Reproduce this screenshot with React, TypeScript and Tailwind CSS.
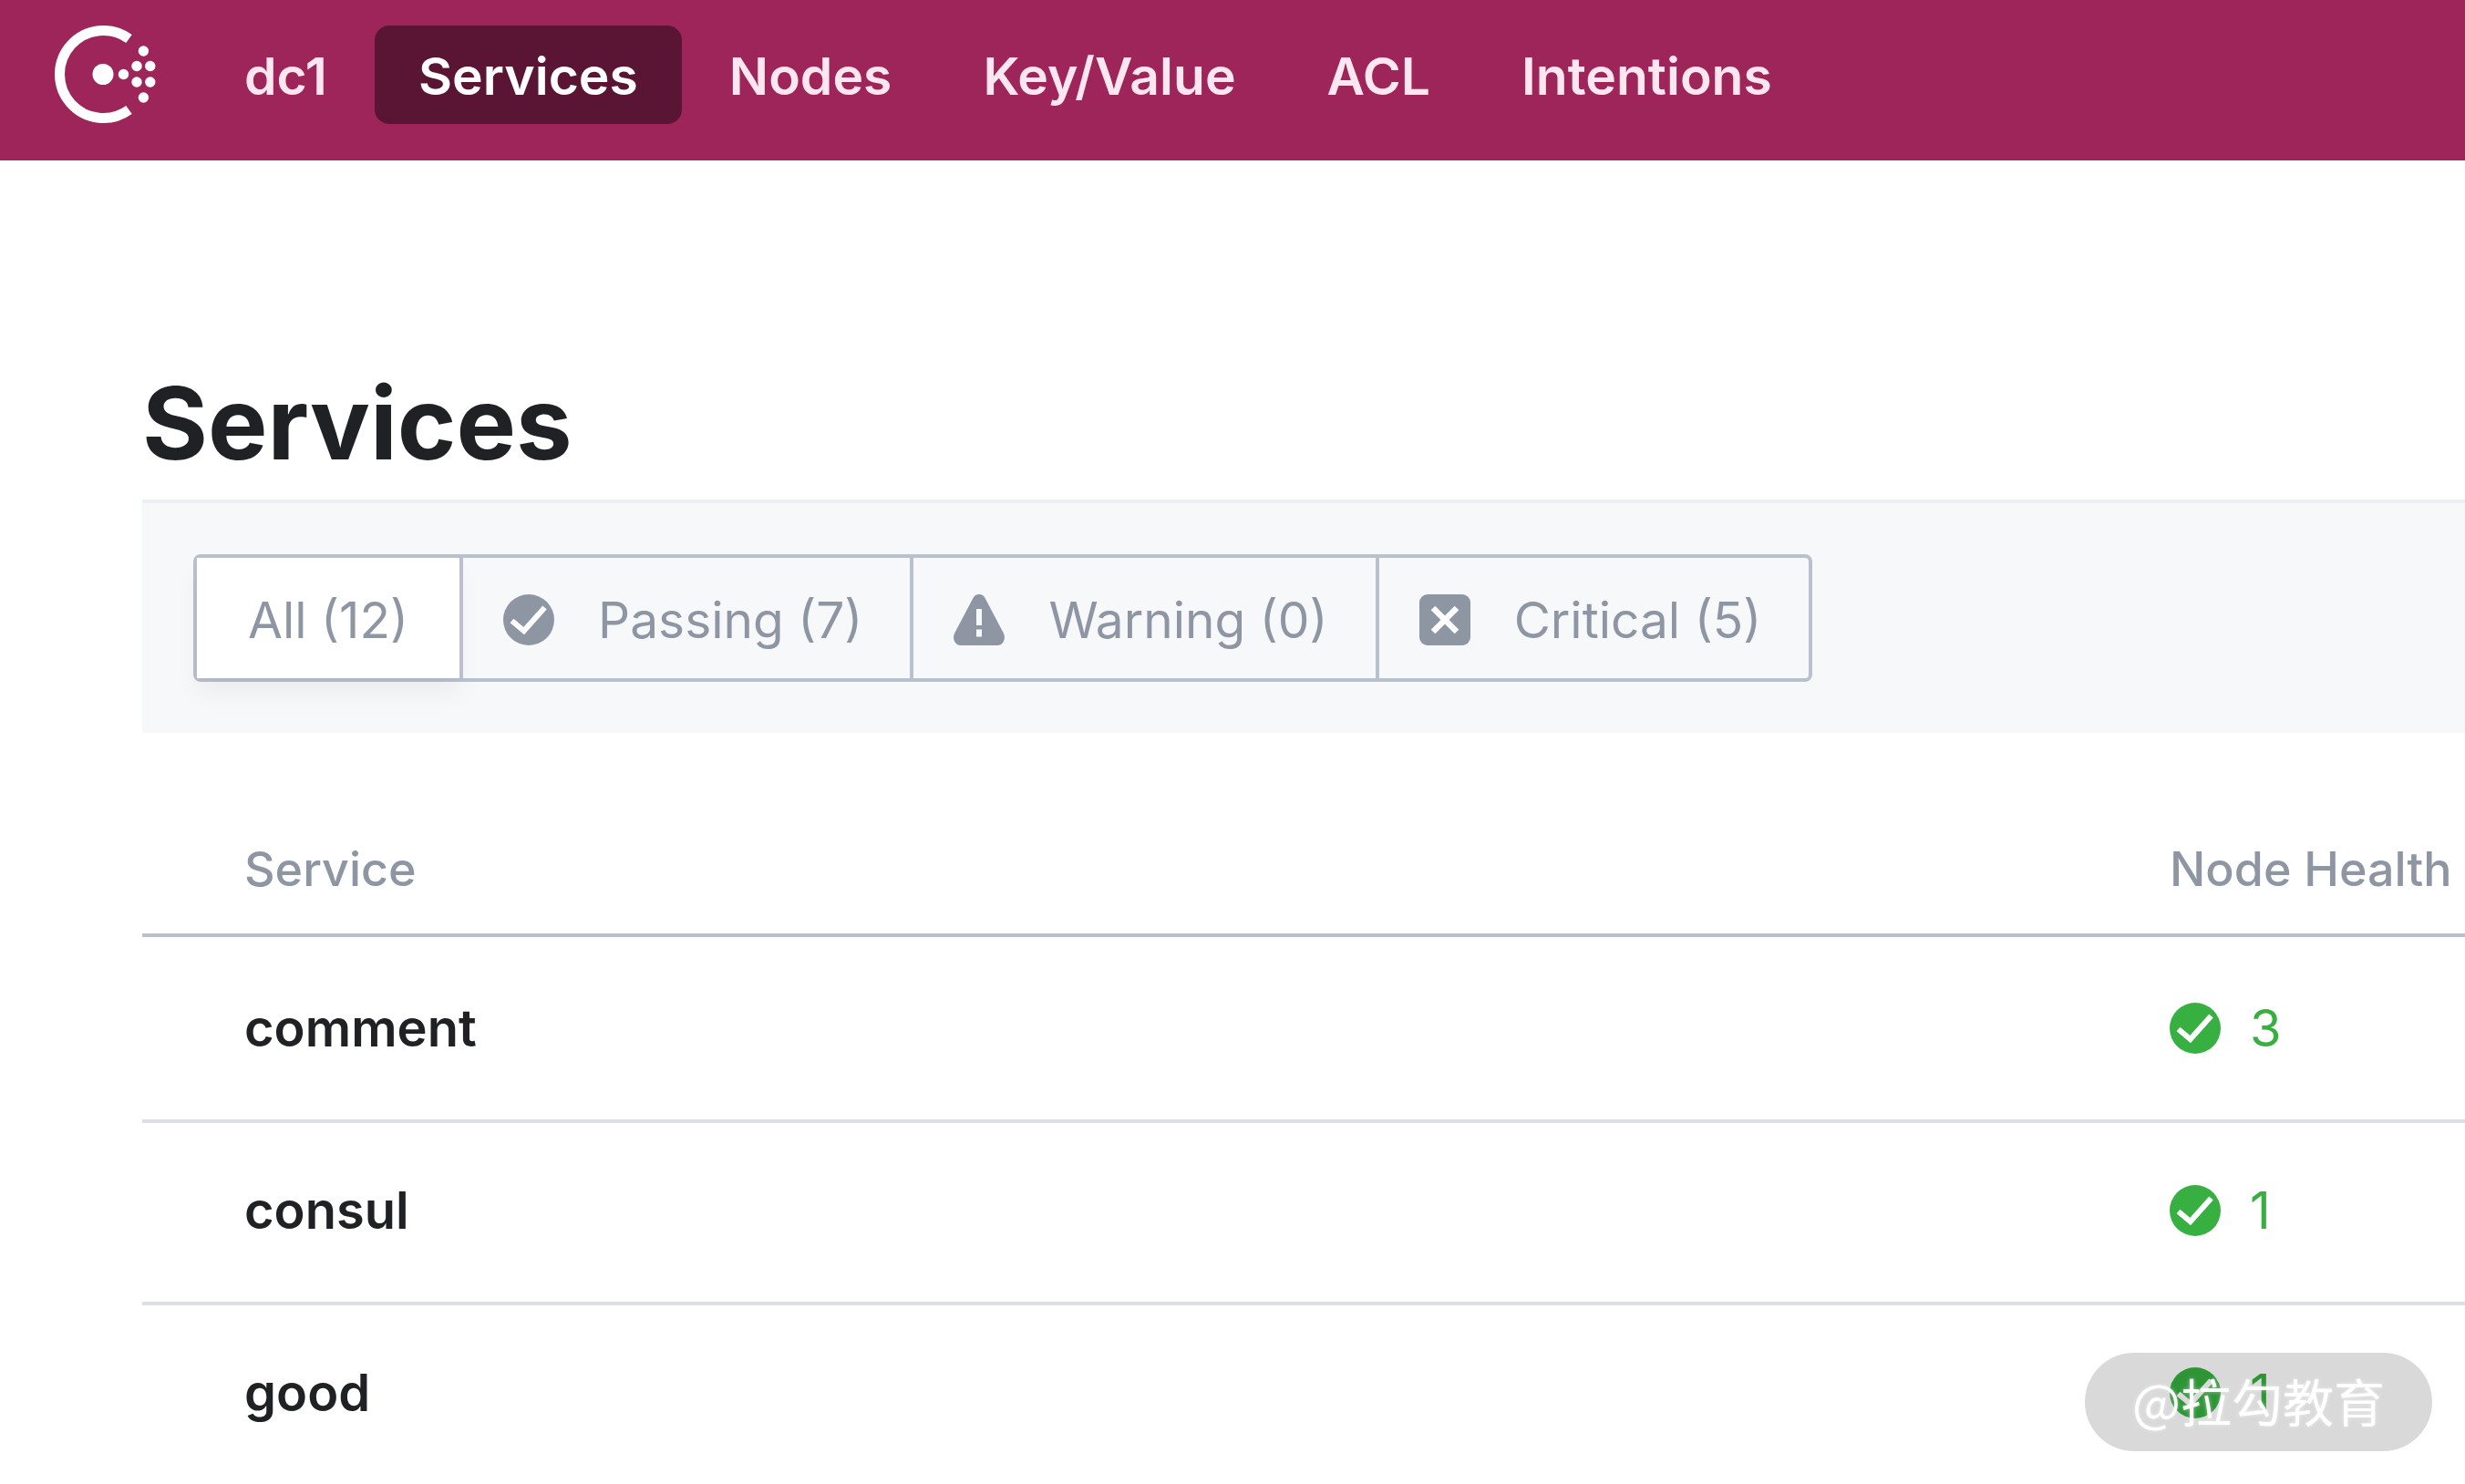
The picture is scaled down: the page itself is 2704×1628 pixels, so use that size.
import { useState } from "react";

type IconProps = { className?: string };

function ConsulLogo() {
  return (
    <svg viewBox="0 0 112 108" className="h-[108px] w-[112px]" fill="#ffffff" aria-hidden="true">
      <path d="M81.5 14.5 A48 48 0 1 0 81.5 92.5" fill="none" stroke="#ffffff" strokeWidth="11" />
      <circle cx="53" cy="53.5" r="11.5" />
      <circle cx="75.5" cy="53.5" r="5.7" />
      <circle cx="90" cy="44.5" r="5.7" />
      <circle cx="104.8" cy="44.5" r="5.7" />
      <circle cx="90" cy="62" r="5.7" />
      <circle cx="104.8" cy="62" r="5.7" />
      <circle cx="97.4" cy="28" r="5.7" />
      <circle cx="97.4" cy="79" r="5.7" />
    </svg>
  );
}

function PassingIcon({ className }: IconProps) {
  return (
    <svg viewBox="0 0 56 56" className={className} aria-hidden="true">
      <circle cx="28" cy="28" r="28" fill="currentColor" />
      <path d="M9.5 29 L22.7 40 L45.5 14.5" fill="none" stroke="#ffffff" strokeWidth="6" />
    </svg>
  );
}

function WarningIcon({ className }: IconProps) {
  return (
    <svg viewBox="0 0 56 56" className={className} aria-hidden="true">
      <path
        d="M21.5 4 Q23.5 0 28 0 Q32.5 0 34.5 4 L54.8 42.5 Q57 47 55 51.5 Q52.5 56 48 56 L8 56 Q3.5 56 1 51.5 Q-1 47 1.2 42.5 Z"
        fill="currentColor"
      />
      <rect x="25" y="16" width="6" height="18" fill="#f7f8fa" />
      <rect x="25" y="38.5" width="6" height="8" fill="#f7f8fa" />
    </svg>
  );
}

function CriticalIcon({ className }: IconProps) {
  return (
    <svg viewBox="0 0 56 56" className={className} aria-hidden="true">
      <rect width="56" height="56" rx="9" fill="currentColor" />
      <path d="M15 15 L41 41 M41 15 L15 41" fill="none" stroke="#ffffff" strokeWidth="6.5" />
    </svg>
  );
}

const navItems = ["Services", "Nodes", "Key/Value", "ACL", "Intentions"];

const filters = [
  { id: "all", label: "All (12)", Icon: null },
  { id: "passing", label: "Passing (7)", Icon: PassingIcon },
  { id: "warning", label: "Warning (0)", Icon: WarningIcon },
  { id: "critical", label: "Critical (5)", Icon: CriticalIcon },
];

const services = [
  { name: "comment", passing: 3 },
  { name: "consul", passing: 1 },
  { name: "good", passing: 1 },
];

export default function App() {
  const [filter, setFilter] = useState("all");

  return (
    <div className="relative min-h-screen overflow-x-hidden bg-white font-['Inter','Noto_Sans_CJK_SC',sans-serif] text-[56px] leading-[68px] text-[#1f2124]">
      <header className="flex h-44 items-start bg-[#9d2559] pt-7 pl-[60px]">
        <a href="#home" aria-label="Consul">
          <ConsulLogo />
        </a>
        <nav className="ml-12 flex gap-1 text-[57px] font-semibold text-[#fce6f0]">
          <a href="#dc1" className="flex h-[108px] items-center px-12 pt-1">
            dc1
          </a>
          {navItems.map((item) => (
            <a
              key={item}
              href={"#" + item.toLowerCase()}
              className={
                item === "Services"
                  ? "flex h-[108px] items-center rounded-2xl bg-[#591533] px-12 pt-1 text-white"
                  : "flex h-[108px] items-center px-12 pt-1"
              }
            >
              {item}
            </a>
          ))}
        </nav>
      </header>

      <main className="pt-[220px] pl-[156px]">
        <h1 className="text-[110px] leading-[136px] font-bold">Services</h1>

        <div className="mt-4 border-t-4 border-[#ebeef2] bg-[#f7f8fa] px-14 py-14">
          <fieldset
            aria-label="Filter services by health"
            className="flex w-fit rounded-lg border-4 border-[#bac1cc] text-[55px] text-[#8e96a3]"
          >
            {filters.map(({ id, label, Icon }, i) => (
              <label
                key={id}
                className={
                  "flex h-33 cursor-pointer items-center pt-1 " +
                  (Icon ? "gap-12 pr-[52px] pl-11 " : "px-14 ") +
                  (i > 0 ? "border-l-4 border-[#bac1cc] " : "") +
                  (filter === id ? "bg-white shadow-[0_16px_24px_rgba(0,0,0,0.05)]" : "")
                }
              >
                <input
                  type="radio"
                  name="health"
                  className="sr-only"
                  checked={filter === id}
                  onChange={() => setFilter(id)}
                />
                {Icon && <Icon className="size-14" />}
                <span>{label}</span>
              </label>
            ))}
          </fieldset>
        </div>

        <table className="mt-[118px] w-full table-fixed border-separate border-spacing-0 text-left">
          <thead>
            <tr className="text-[52px] leading-[64px] text-[#8e96a3]">
              <th className="border-b-4 border-[#bac1cc] pb-[38px] pl-28 font-medium">Service</th>
              <th className="w-[324px] border-b-4 border-[#bac1cc] pb-[38px] font-medium whitespace-nowrap">
                Node Health
              </th>
            </tr>
          </thead>
          <tbody>
            {services.map(({ name, passing }) => (
              <tr
                key={name}
                className="h-50 first:h-51 last:h-49 not-first:[&>td]:pb-1 last:[&>td]:border-b-0"
              >
                <td className="border-b-4 border-[#dce0e6] pl-28 font-semibold">
                  <a href={"#" + name}>{name}</a>
                </td>
                <td className="border-b-4 border-[#dce0e6] text-[#37b041]">
                  <span className="flex items-center gap-8">
                    <PassingIcon className="size-14" />
                    {passing}
                  </span>
                </td>
              </tr>
            ))}
          </tbody>
        </table>
      </main>

      <div className="absolute right-9 bottom-9 flex h-[108px] items-center rounded-full bg-black/15 px-[52px] pb-1 font-['Noto_Sans_CJK_SC',sans-serif] text-white [text-shadow:0_0_4px_rgba(255,255,255,0.5)]">
        @拉勾教育
      </div>
    </div>
  );
}
